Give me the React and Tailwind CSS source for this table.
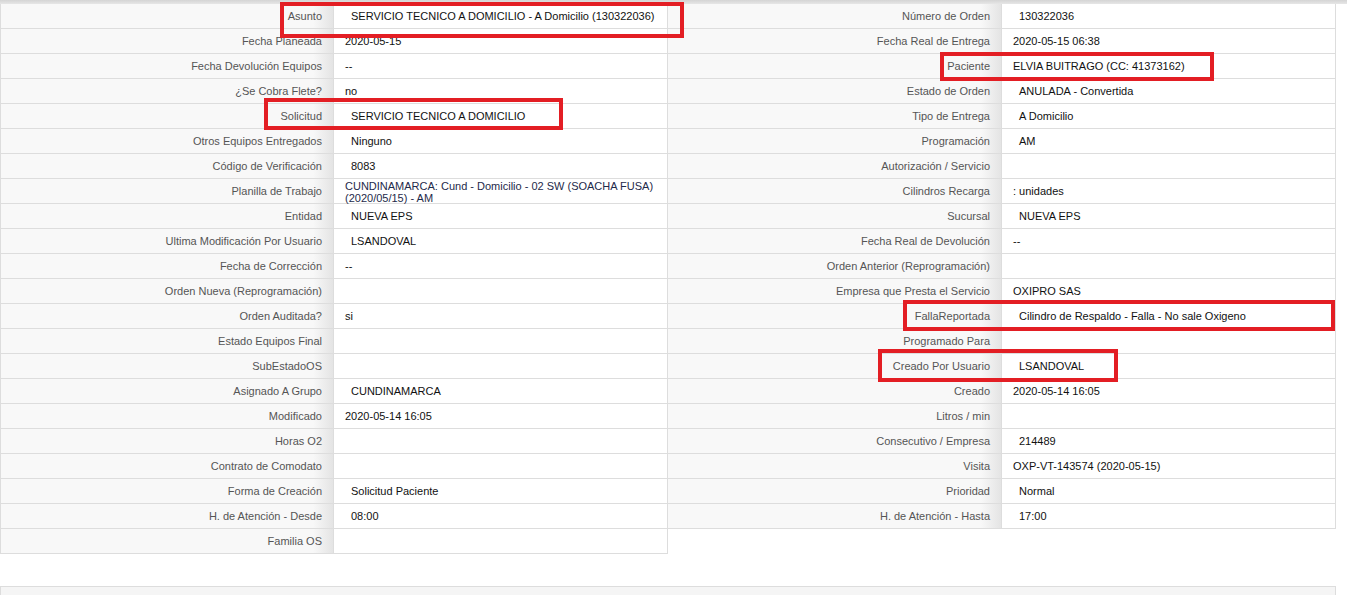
const LEFT = [
  ["Asunto", "SERVICIO TECNICO A DOMICILIO - A Domicilio (130322036)", 1],
  ["Fecha Planeada", "2020-05-15", 0],
  ["Fecha Devolución Equipos", "--", 0],
  ["¿Se Cobra Flete?", "no", 0],
  ["Solicitud", "SERVICIO TECNICO A DOMICILIO", 1],
  ["Otros Equipos Entregados", "Ninguno", 1],
  ["Código de Verificación", "8083", 1],
  ["Planilla de Trabajo", "CUNDINAMARCA: Cund - Domicilio - 02 SW (SOACHA FUSA) (2020/05/15) - AM", 2],
  ["Entidad", "NUEVA EPS", 1],
  ["Ultima Modificación Por Usuario", "LSANDOVAL", 1],
  ["Fecha de Corrección", "--", 0],
  ["Orden Nueva (Reprogramación)", "", 0],
  ["Orden Auditada?", "si", 0],
  ["Estado Equipos Final", "", 0],
  ["SubEstadoOS", "", 0],
  ["Asignado A Grupo", "CUNDINAMARCA", 1],
  ["Modificado", "2020-05-14 16:05", 0],
  ["Horas O2", "", 0],
  ["Contrato de Comodato", "", 0],
  ["Forma de Creación", "Solicitud Paciente", 1],
  ["H. de Atención - Desde", "08:00", 1],
  ["Familia OS", "", 0],
];

const RIGHT = [
  ["Número de Orden", "130322036", 1],
  ["Fecha Real de Entrega", "2020-05-15 06:38", 0],
  ["Paciente", "ELVIA BUITRAGO (CC: 41373162)", 0],
  ["Estado de Orden", "ANULADA - Convertida", 1],
  ["Tipo de Entrega", "A Domicilio", 1],
  ["Programación", "AM", 1],
  ["Autorización / Servicio", "", 0],
  ["Cilindros Recarga", ": unidades", 0],
  ["Sucursal", "NUEVA EPS", 1],
  ["Fecha Real de Devolución", "--", 0],
  ["Orden Anterior (Reprogramación)", "", 0],
  ["Empresa que Presta el Servicio", "OXIPRO SAS", 0],
  ["FallaReportada", "Cilindro de Respaldo - Falla - No sale Oxigeno", 1],
  ["Programado Para", "", 0],
  ["Creado Por Usuario", "LSANDOVAL", 1],
  ["Creado", "2020-05-14 16:05", 0],
  ["Litros / min", "", 0],
  ["Consecutivo / Empresa", "214489", 1],
  ["Visita", "OXP-VT-143574 (2020-05-15)", 0],
  ["Prioridad", "Normal", 1],
  ["H. de Atención - Hasta", "17:00", 1],
];

// cajas rojas que marcan los campos
const MARKS = [
  "left-[280px] top-[2px] w-[404px] h-[36px]",
  "left-[264px] top-[98px] w-[299px] h-[32px]",
  "left-[940px] top-[52px] w-[274px] h-[29px]",
  "left-[903px] top-[300px] w-[432px] h-[31px]",
  "left-[878px] top-[349px] w-[240px] h-[33px]",
];

function Row({ label, value, pad, first }) {
  return (
    <div className="flex h-[25px] border-b border-[#dddddd]">
      <div className={`w-[334px] shrink-0 flex items-center justify-end pr-[11px] text-[#555555] border-r border-[#dddddd] bg-[linear-gradient(to_right,#f8f8f8_94%,#e4e4e4)] ${first ? "border-l" : ""}`}>
        {label}
      </div>
      {pad === 2 ? (
        <div className="w-[334px] shrink-0 pl-[11px] pr-2 pt-[1px] leading-[12px] text-[#1e2a4a] border-r border-[#dddddd] bg-white">
          {value}
        </div>
      ) : (
        <div className={`w-[334px] shrink-0 flex items-center text-[#111111] border-r border-[#dddddd] bg-white ${pad ? "pl-[17px]" : "pl-[11px]"}`}>
          {value}
        </div>
      )}
    </div>
  );
}

export default function App() {
  return (
    <div className="relative w-[1347px] h-[595px] overflow-hidden bg-white text-[11px] font-['Liberation_Sans',Arial,sans-serif]">
      <div className="h-[4px] bg-[linear-gradient(to_bottom,#d4d4d4,#e6e6e6)]" />
      <div className="flex w-[1336px]">
        <div className="w-[668px]">
          {LEFT.map(([l, v, p]) => <Row key={l} label={l} value={v} pad={p} first />)}
        </div>
        <div className="w-[668px]">
          {RIGHT.map(([l, v, p]) => <Row key={l} label={l} value={v} pad={p} />)}
        </div>
      </div>
      <div className="mt-[32px] w-[1336px] h-[40px] bg-[#f5f5f5] border border-[#dddddd]" />

      {MARKS.map((m, i) => (
        <div key={i} className={`absolute border-[4px] border-[#e31e24] pointer-events-none ${m}`} />
      ))}
    </div>
  );
}
